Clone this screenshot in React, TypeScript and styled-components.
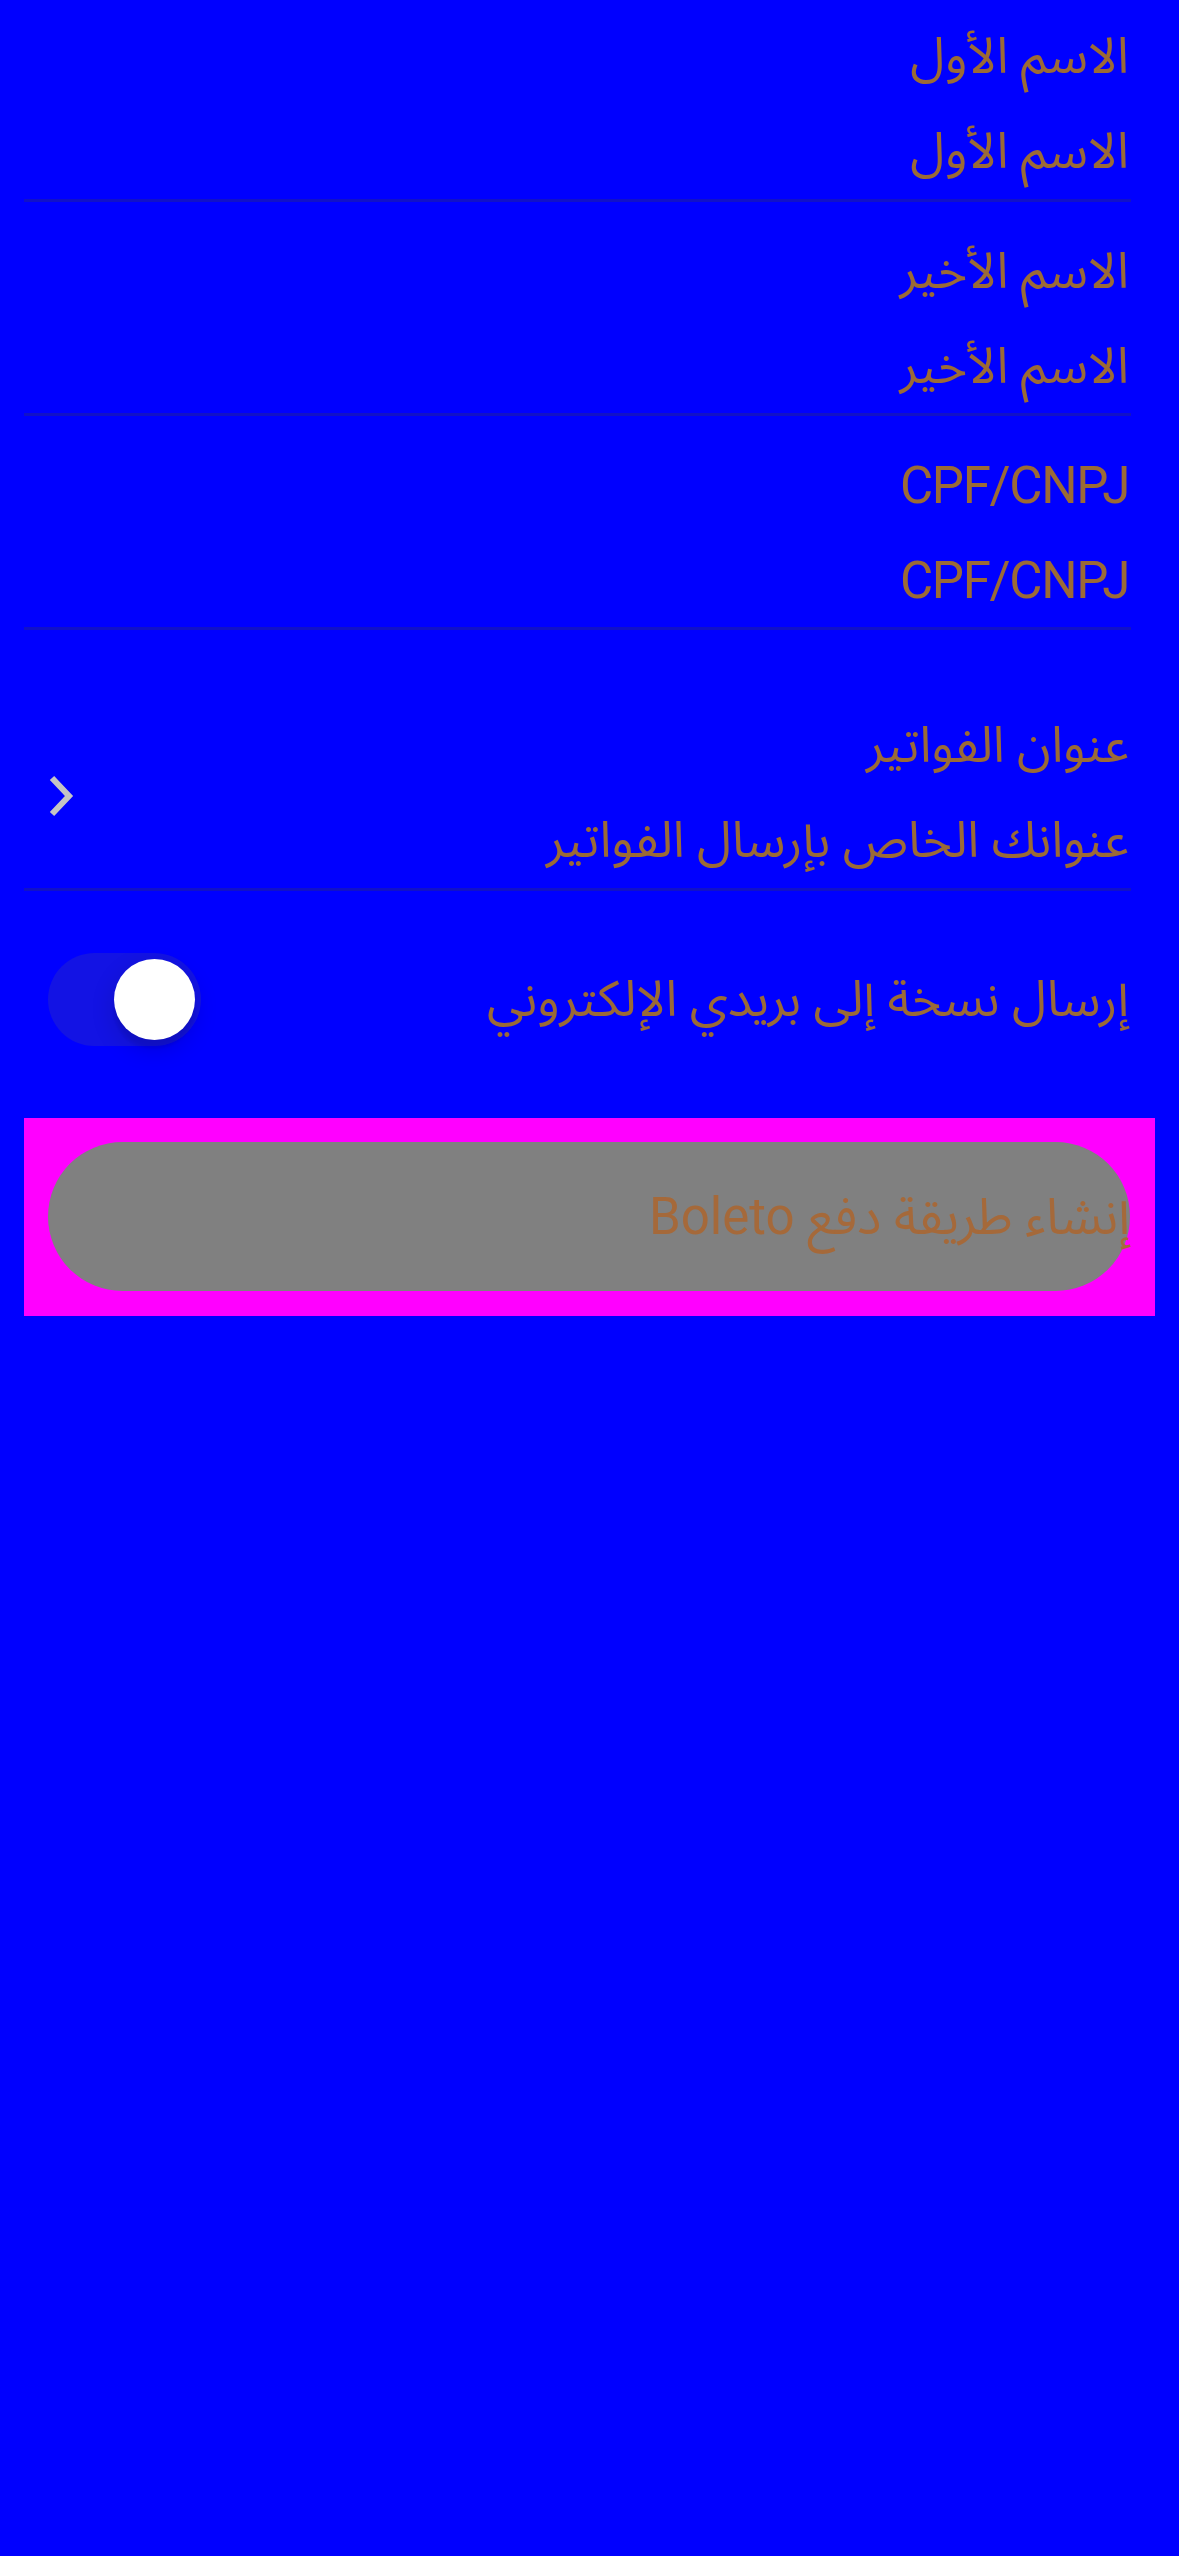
import React from "react";
import styled, { createGlobalStyle } from "styled-components";

const GlobalStyle = createGlobalStyle`
  html, body {
    margin: 0;
    padding: 0;
    background: #0000ff;
  }
  body {
    font-family: Roboto, "Noto Sans Arabic", "DejaVu Sans", sans-serif;
  }
`;

const Page = styled.div`
  box-sizing: border-box;
  min-height: 2556px;
  width: 1179px;
  background: #0000ff;
  padding: 0 24px;
  font-family: Roboto, "Noto Sans Arabic", "DejaVu Sans", sans-serif;
`;

const Form = styled.div`
  margin-right: 24px;
  display: flex;
  flex-direction: column;
`;

const FieldGroup = styled.div<{ $top: number; $bottom?: number }>`
  padding-top: ${(p) => p.$top}px;
  padding-bottom: ${(p) => p.$bottom ?? 1}px;
  border-bottom: 3px solid rgb(17, 17, 200);
  display: flex;
  flex-direction: column;
`;

const Line = styled.div`
  font-size: 50px;
  line-height: 99px;
  height: 95px;
  color: #9b6a36;
  text-align: right;
  white-space: nowrap;
  padding-right: 2px;
`;

const LatinLine = styled(Line)`
  font-size: 51px;
  letter-spacing: -1.3px;
`;

const NavRow = styled.div`
  padding-top: 66px;
  padding-bottom: 2px;
  border-bottom: 3px solid rgb(17, 17, 200);
  display: flex;
  align-items: center;
  gap: 24px;
`;

const NavText = styled.div`
  flex: 1;
  display: flex;
  flex-direction: column;
`;

const Chevron = styled.svg`
  width: 26px;
  height: 42px;
  margin-left: 24px;
  margin-top: 10px;
  flex: none;
`;

const ToggleRow = styled.div`
  height: 216px;
  display: flex;
  align-items: center;
  justify-content: space-between;
`;

const ToggleLabel = styled.div`
  font-size: 50px;
  line-height: 99px;
  height: 95px;
  color: #9b6a36;
  white-space: nowrap;
  margin-bottom: 4px;
  padding-right: 2px;
`;

const Track = styled.div`
  position: relative;
  width: 153px;
  height: 93px;
  border-radius: 47px;
  background: rgb(19, 19, 228);
  margin-left: 24px;
  flex: none;
`;

const Knob = styled.div`
  position: absolute;
  top: 6px;
  right: 6px;
  width: 81px;
  height: 81px;
  border-radius: 50%;
  background: #ffffff;
  box-shadow: 0 9px 24px rgba(0, 0, 0, 0.15), 0 9px 3px rgba(0, 0, 0, 0.06);
`;

const ButtonWrap = styled.div`
  margin-top: 11px;
  background: #ff00ff;
  padding: 24px 25px 25px 24px;
`;

const PrimaryButton = styled.button`
  box-sizing: border-box;
  display: flex;
  align-items: center;
  justify-content: flex-start;
  width: 100%;
  height: 149px;
  border: none;
  border-radius: 75px;
  background: #808080;
  padding: 3px 0 0 0;
  font-family: Roboto, "Noto Sans Arabic", "DejaVu Sans", sans-serif;
  font-size: 51px;
  color: #a5693a;
  white-space: nowrap;
`;

export default function App() {
  return (
    <>
      <GlobalStyle />
      <Page dir="rtl">
        <Form>
          <FieldGroup $top={7} $bottom={2}>
            <Line>الاسم الأول</Line>
            <Line>الاسم الأول</Line>
          </FieldGroup>
          <FieldGroup $top={20}>
            <Line>الاسم الأخير</Line>
            <Line>الاسم الأخير</Line>
          </FieldGroup>
          <FieldGroup $top={20}>
            <LatinLine>CPF/CNPJ</LatinLine>
            <LatinLine>CPF/CNPJ</LatinLine>
          </FieldGroup>
          <NavRow>
            <NavText>
              <Line>عنوان الفواتير</Line>
              <Line>عنوانك الخاص بإرسال الفواتير</Line>
            </NavText>
            <Chevron viewBox="0 0 26 42" aria-hidden="true">
              <path
                d="M4 3 L21 21 L4 39"
                fill="none"
                stroke="#c4c4c4"
                strokeWidth="6"
                strokeLinecap="butt"
                strokeLinejoin="miter"
              />
            </Chevron>
          </NavRow>
          <ToggleRow>
            <ToggleLabel>إرسال نسخة إلى بريدي الإلكتروني</ToggleLabel>
            <Track>
              <Knob />
            </Track>
          </ToggleRow>
        </Form>
        <ButtonWrap>
          <PrimaryButton>إنشاء طريقة دفع Boleto</PrimaryButton>
        </ButtonWrap>
      </Page>
    </>
  );
}
